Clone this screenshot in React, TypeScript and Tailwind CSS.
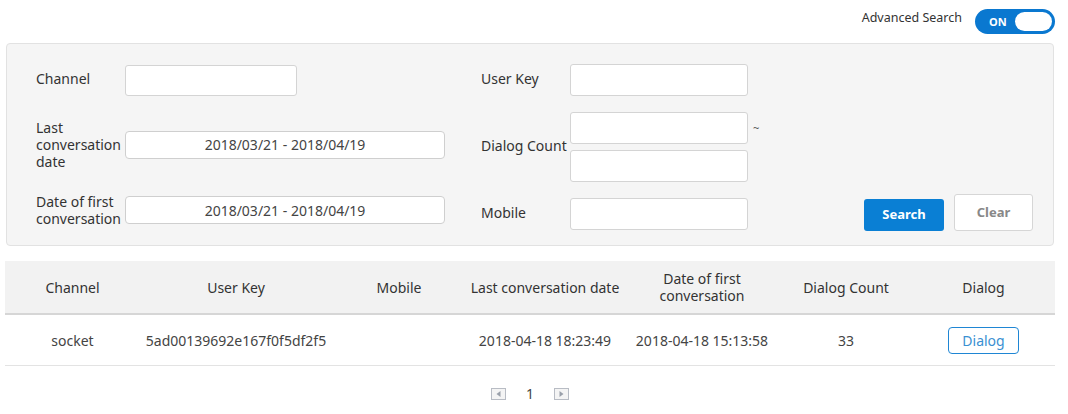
import React from "react";

const font = { fontFamily: '"Noto Sans", "Open Sans", sans-serif' };

function Input({ className = "" }: { className?: string }) {
  return <div className={"bg-white border border-[#d4d4d4] rounded-[3px] " + className} />;
}

function DateInput() {
  return (
    <div className="w-[320px] h-[28px] bg-white border border-[#cfcfcf] rounded-[4px] flex items-center justify-center text-[14px] text-[#444]">
      2018/03/21 - 2018/04/19
    </div>
  );
}

function PageIcon({ dir }: { dir: "l" | "r" }) {
  return (
    <svg width="15" height="12" viewBox="0 0 15 12">
      <rect x="0.5" y="0.5" width="14" height="11" fill="#f4f4f4" stroke="#b8bcc4" />
      {dir === "l" ? (
        <polygon points="9.5,3 9.5,9 5.5,6" fill="#9aa0aa" />
      ) : (
        <polygon points="5.5,3 5.5,9 9.5,6" fill="#9aa0aa" />
      )}
    </svg>
  );
}

const cols = [
  { w: "w-[135px]", h: "Channel" },
  { w: "w-[192px]", h: "User Key" },
  { w: "w-[134px]", h: "Mobile" },
  { w: "w-[158px]", h: "Last conversation date" },
  { w: "w-[156px]", h: "Date of first conversation" },
  { w: "w-[132px]", h: "Dialog Count" },
  { w: "w-[143px]", h: "Dialog" },
];

export default function App() {
  return (
    <div style={font} className="w-[1068px] h-[414px] bg-white text-[#333] overflow-hidden">
      {/* top bar */}
      <div className="h-[43px] flex items-start justify-end pr-[13px] pt-[9px]">
        <span className="text-[12.5px] text-[#333] mr-[13px] leading-[18px]">Advanced Search</span>
        <div className="w-[80px] h-[25px] rounded-full bg-[#0a78d0] flex items-center justify-between pl-[14px] pr-[3px]">
          <span className="text-white text-[11px] font-bold leading-none">ON</span>
          <div className="w-[37px] h-[19px] rounded-full bg-white" />
        </div>
      </div>

      {/* filter panel */}
      <div className="ml-[6px] w-[1048px] h-[203px] bg-[#f5f5f5] border border-[#e2e2e2] rounded-[4px] flex">
        {/* left column */}
        <div className="pl-[29px] pt-[20px] w-[474px] flex flex-col">
          <div className="flex items-center h-[32px]">
            <div className="w-[89px] text-[14px] leading-[17px] pb-[4px]">Channel</div>
            <Input className="w-[172px] h-[31px]" />
          </div>
          <div className="flex items-center mt-[23px]">
            <div className="w-[89px] text-[14px] leading-[17px]">
              Last
              <br />
              conversation
              <br />
              date
            </div>
            <DateInput />
          </div>
          <div className="flex items-center mt-[23px]">
            <div className="w-[89px] text-[14px] leading-[17px]">
              Date of first
              <br />
              conversation
            </div>
            <DateInput />
          </div>
        </div>
        {/* right column */}
        <div className="pt-[20px] flex flex-col">
          <div className="flex items-center">
            <div className="w-[89px] text-[14px] leading-[17px] pb-[4px]">User Key</div>
            <Input className="w-[178px] h-[32px]" />
          </div>
          <div className="flex items-center mt-[16px]">
            <div className="w-[89px] text-[14px] leading-[17px] whitespace-nowrap pb-[4px]">Dialog Count</div>
            <div className="flex flex-col gap-[6px]">
              <Input className="w-[178px] h-[32px]" />
              <Input className="w-[178px] h-[32px]" />
            </div>
            <div className="self-start mt-[8px] ml-[5px] text-[11px] text-[#555]">~</div>
          </div>
          <div className="flex items-center mt-[16px]">
            <div className="w-[89px] text-[14px] leading-[17px] pb-[4px]">Mobile</div>
            <Input className="w-[178px] h-[32px]" />
          </div>
        </div>
        <div className="flex-1 flex items-end justify-end gap-[10px] pr-[20px] pb-[14px]">
          <button className="w-[80px] h-[32px] bg-[#0a7fd4] rounded-[3px] text-white text-[13px] font-bold">
            Search
          </button>
          <button className="w-[79px] h-[37px] bg-white border border-[#d6d6d6] rounded-[3px] text-[#888] text-[13px] font-bold">
            Clear
          </button>
        </div>
      </div>

      {/* table */}
      <div className="ml-[5px] mt-[15px] w-[1050px]">
        <div className="flex h-[54px] bg-[#f2f2f2] border-b-[2px] border-[#d6d6d6] text-[14px] text-[#333]">
          {cols.map((c) => (
            <div key={c.h} className={c.w + " flex items-center justify-center text-center leading-[17px]"}>
              {c.h === "Date of first conversation" ? (
                <span>
                  Date of first
                  <br />
                  conversation
                </span>
              ) : (
                c.h
              )}
            </div>
          ))}
        </div>
        <div className="flex h-[51px] border-b border-[#e3e3e3] text-[14px] text-[#444]">
          <div className="w-[135px] flex items-center justify-center">socket</div>
          <div className="w-[192px] flex items-center justify-center">5ad00139692e167f0f5df2f5</div>
          <div className="w-[134px]" />
          <div className="w-[158px] flex items-center justify-center">2018-04-18 18:23:49</div>
          <div className="w-[156px] flex items-center justify-center">2018-04-18 15:13:58</div>
          <div className="w-[132px] flex items-center justify-center">33</div>
          <div className="w-[143px] flex items-center justify-center">
            <button className="w-[71px] h-[27px] border border-[#1f86d4] rounded-[4px] text-[#3a90d2] text-[14px]">
              Dialog
            </button>
          </div>
        </div>
        <div className="flex items-center justify-center gap-[20px] mt-[21px] text-[14px] text-[#444]">
          <PageIcon dir="l" />
          <span className="leading-none">1</span>
          <PageIcon dir="r" />
        </div>
      </div>
    </div>
  );
}
